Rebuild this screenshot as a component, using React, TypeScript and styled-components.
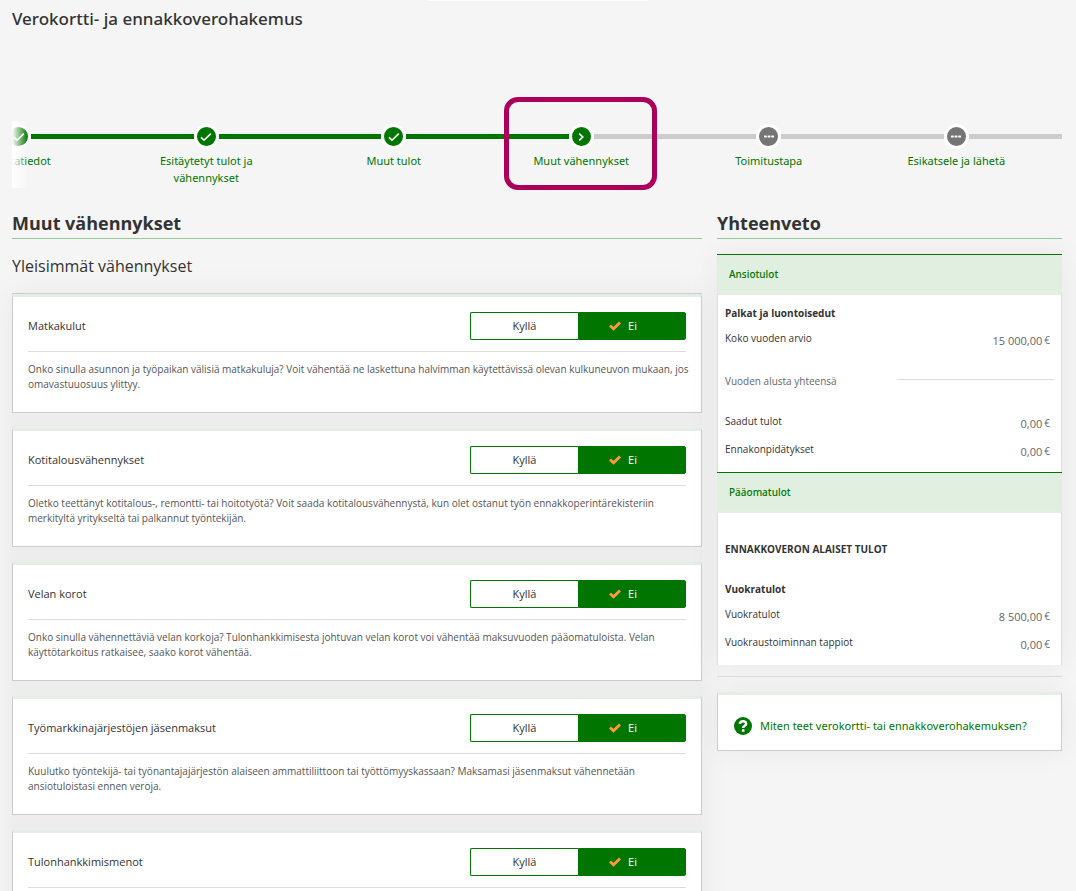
import React from 'react';
import styled, { createGlobalStyle } from 'styled-components';

const GlobalStyle = createGlobalStyle`
  *, *::before, *::after { box-sizing: border-box; }
  html { background: #f5f5f5; }
  body {
    margin: 0;
    overflow-x: hidden;
    color: #333;
    font-family: 'Open Sans', 'Noto Sans', sans-serif;
    font-size: 11px;
    line-height: 18px;
  }
  h1, h2, h3, h4, p, ol, dl, dd { margin: 0; padding: 0; }
`;

const green = '#007600';
const softShadow = '0 0 30px rgba(0, 0, 0, 0.06)';
const mediumFont = "'Noto Sans', 'Open Sans', sans-serif";

const Page = styled.div`
  position: relative;
  padding: 6px 14px 0 12px;
`;

const TopTab = styled.div`
  position: absolute;
  top: 0;
  left: 427px;
  width: 221px;
  height: 1px;
  background: #fff;
`;

const PageTitle = styled.h1`
  font-family: ${mediumFont};
  font-size: 17px;
  line-height: 26px;
  font-weight: 500;
`;

const StepViewport = styled.nav`
  position: relative;
  margin-top: 65px;
  padding-top: 27px;
  height: 94px;
  overflow-x: clip;
`;

const StepFade = styled.div`
  position: absolute;
  left: 0;
  top: 24px;
  width: 16px;
  height: 67px;
  background: linear-gradient(to right, #fff, rgba(255, 255, 255, 0));
`;

const StepList = styled.ol`
  display: flex;
  margin-left: -87px;
  list-style: none;

  &::after {
    content: '';
    flex: none;
    width: 12px;
    height: 5px;
    margin-top: 10px;
    background: #ccc;
  }
`;

const Step = styled.li`
  position: relative;
  flex: 1 1 0;
  min-width: 0;
`;

const StepTrack = styled.div`
  display: flex;
  align-items: center;
`;

const StepLine = styled.span<{ $done: boolean }>`
  flex: 1;
  height: 5px;
  background: ${(p) => (p.$done ? green : '#ccc')};
`;

const StepDot = styled.span<{ $todo: boolean }>`
  display: flex;
  flex: none;
  align-items: center;
  justify-content: center;
  width: 25px;
  height: 25px;
  border: 3px solid #fff;
  border-radius: 50%;
  background: ${(p) => (p.$todo ? '#757575' : green)};
`;

const StepLabel = styled.a`
  display: block;
  padding: 3px 40px 0;
  color: ${green};
  font-family: ${mediumFont};
  font-size: 11px;
  line-height: 17px;
  text-align: center;
  text-decoration: none;
`;

const StepHighlight = styled.span`
  position: absolute;
  top: -27px;
  left: 50%;
  width: 153px;
  height: 93px;
  margin-left: -77px;
  border: 5px solid #aa005a;
  border-radius: 14px;
  pointer-events: none;
`;

const Columns = styled.div`
  display: grid;
  grid-template-columns: 2fr 1fr;
  gap: 15px;
  margin-top: 20px;
`;

const SectionTitle = styled.h2`
  padding-bottom: 2px;
  border-bottom: 1px solid #94c894;
  font-size: 18px;
  line-height: 25px;
  font-weight: 700;
`;

const SubTitle = styled.h3`
  margin: 14px 0;
  font-size: 16px;
  line-height: 26px;
  font-weight: 400;
`;

const CardStack = styled.div`
  display: flex;
  flex-direction: column;
  gap: 15px;
  border-top: 1px solid #ccc;
  background: #ededed;
  box-shadow: ${softShadow};
`;

const Card = styled.section`
  padding: 15px 15px 20px;
  border: 1px solid #ccc;
  border-top: 3px solid #e4eee4;
  background: #fff;
`;

const CardHead = styled.div`
  display: flex;
  align-items: center;
  justify-content: space-between;
  padding-bottom: 11px;
  border-bottom: 1px solid #ddd;
`;

const CardName = styled.h4`
  font-size: 11px;
  line-height: 18px;
  font-weight: 400;
`;

const Toggle = styled.div`
  display: grid;
  grid-template-columns: 1fr 1fr;
  width: 216px;
  height: 28px;
`;

const ToggleButton = styled.button<{ $on?: boolean }>`
  display: flex;
  align-items: center;
  justify-content: center;
  padding: 0;
  border: 1px solid ${green};
  border-right-width: ${(p) => (p.$on ? '1px' : '0')};
  border-radius: ${(p) => (p.$on ? '0 2px 2px 0' : '2px 0 0 2px')};
  background: ${(p) => (p.$on ? green : '#fff')};
  color: ${(p) => (p.$on ? '#fff' : '#333')};
  font: inherit;

  svg { margin: 0 7px 0 -18px; }
`;

const CardText = styled.p`
  margin-right: -8px;
  padding-top: 10px;
  color: #555;
  font-size: 10px;
  line-height: 15px;
`;

const GroupTitle = styled.h3`
  height: 38px;
  padding: 10px 12px;
  border-top: 1px solid ${green};
  background: #e0efe0;
  color: ${green};
  font-family: ${mediumFont};
  font-size: 10px;
  line-height: 18px;
  font-weight: 500;
`;

const Summary = styled.div`
  margin-top: 15px;
  box-shadow: ${softShadow};
`;

const Group = styled.div`
  padding: 9px 7px 11px;
  border: 1px solid #ddd;
  border-top: 3px solid #e4eee4;
  border-bottom: 0;
  background: #fff;
`;

const GroupHeading = styled.h4<{ $spaced?: boolean }>`
  padding: ${(p) => (p.$spaced ? '18px 0 22px' : '0')};
  font-size: 10px;
  line-height: 18px;
  font-weight: 700;
`;

const AmountRow = styled.div`
  display: flex;
  justify-content: space-between;
  padding: 7px 4px 2px 0;
`;

const AmountName = styled.dt`
  font-size: 10px;
  line-height: 18px;
`;

const AmountValue = styled.dd`
  display: flex;
  gap: 2px;
  padding-top: 4px;
  color: #666;
  font-size: 11px;
  line-height: 15px;
`;

const Currency = styled.span`
  font-size: 10px;
  line-height: 14px;
`;

const TotalRow = styled.div`
  display: grid;
  grid-template-columns: 1fr 157px;
  padding: 22px 0 15px;
  color: #666;
  font-size: 10px;
  line-height: 18px;
`;

const TotalRule = styled.span`
  height: 8px;
  border-bottom: 1px solid #ddd;
`;

const Divider = styled.hr`
  margin: 11px 0 15px;
  border: 0;
  border-top: 1px solid #ddd;
`;

const HelpCard = styled(Card)`
  padding: 22px 16px 15px;
  box-shadow: ${softShadow};
`;

const HelpLink = styled.a`
  display: flex;
  align-items: center;
  gap: 8px;
  color: ${green};
  font-family: ${mediumFont};
  text-decoration: none;
`;

const Check = () => (
  <svg width="14" height="14" viewBox="0 0 14 14" fill="none" stroke="#fff" strokeWidth="1.6">
    <path d="M2 7.4 5 10.2 11.8 3.6" />
  </svg>
);
const Chevron = () => (
  <svg width="14" height="14" viewBox="0 0 14 14" fill="none" stroke="#fff" strokeWidth="1.6">
    <path d="M5.2 3.6 8.8 7 5.2 10.4" />
  </svg>
);
const Dots = () => (
  <svg width="14" height="14" viewBox="0 0 14 14" fill="#fff">
    <rect x="2" y="5.4" width="2.8" height="2.2" rx=".6" />
    <rect x="5.6" y="5.4" width="2.8" height="2.2" rx=".6" />
    <rect x="9.2" y="5.4" width="2.8" height="2.2" rx=".6" />
  </svg>
);
const OrangeCheck = () => (
  <svg width="12" height="10" viewBox="0 0 12 10" fill="none" stroke="#ff9c33" strokeWidth="2.8">
    <path d="M1 4.4 4.5 7.7 11 1.5" />
  </svg>
);
const Question = () => (
  <svg width="18" height="18" viewBox="0 0 18 18">
    <circle cx="9" cy="9" r="9" fill={green} />
    <path d="M5.8 6.9C6 3.3 12.1 3.3 12.1 6.7 12.1 8.9 9.1 8.6 9.1 11.1" fill="none" stroke="#fff" strokeWidth="2.5" />
    <rect x="7.8" y="12.2" width="2.7" height="2.6" rx=".5" fill="#fff" />
  </svg>
);

type State = 'done' | 'current' | 'todo';
const steps: { name: string; state: State }[] = [
  { name: 'Taustatiedot', state: 'done' },
  { name: 'Esitäytetyt tulot ja vähennykset', state: 'done' },
  { name: 'Muut tulot', state: 'done' },
  { name: 'Muut vähennykset', state: 'current' },
  { name: 'Toimitustapa', state: 'todo' },
  { name: 'Esikatsele ja lähetä', state: 'todo' },
];

const deductions = [
  ['Matkakulut', 'Onko sinulla asunnon ja työpaikan välisiä matkakuluja? Voit vähentää ne laskettuna halvimman käytettävissä olevan kulkuneuvon mukaan, jos omavastuuosuus ylittyy.'],
  ['Kotitalousvähennykset', 'Oletko teettänyt kotitalous-, remontti- tai hoitotyötä? Voit saada kotitalousvähennystä, kun olet ostanut työn ennakkoperintärekisteriin merkityltä yritykseltä tai palkannut työntekijän.'],
  ['Velan korot', 'Onko sinulla vähennettäviä velan korkoja? Tulonhankkimisesta johtuvan velan korot voi vähentää maksuvuoden pääomatuloista. Velan käyttötarkoitus ratkaisee, saako korot vähentää.'],
  ['Työmarkkinajärjestöjen jäsenmaksut', 'Kuulutko työntekijä- tai työnantajajärjestön alaiseen ammattiliittoon tai työttömyyskassaan? Maksamasi jäsenmaksut vähennetään ansiotuloistasi ennen veroja.'],
  ['Tulonhankkimismenot', ''],
];

const Amount = ({ name, value }: { name: string; value: string }) => (
  <AmountRow>
    <AmountName>{name}</AmountName>
    <AmountValue>{value}<Currency>€</Currency></AmountValue>
  </AmountRow>
);

export default function App() {
  return (
    <>
      <GlobalStyle />
      <Page>
        <TopTab />
        <PageTitle>Verokortti- ja ennakkoverohakemus</PageTitle>
        <StepViewport>
          <StepList>
            {steps.map((s) => (
              <Step key={s.name}>
                <StepTrack>
                  <StepLine $done={s.state !== 'todo'} />
                  <StepDot $todo={s.state === 'todo'}>
                    {s.state === 'done' ? <Check /> : s.state === 'current' ? <Chevron /> : <Dots />}
                  </StepDot>
                  <StepLine $done={s.state === 'done'} />
                </StepTrack>
                <StepLabel href="#">{s.name}</StepLabel>
                {s.state === 'current' && <StepHighlight />}
              </Step>
            ))}
          </StepList>
          <StepFade />
        </StepViewport>
        <Columns>
          <main>
            <SectionTitle>Muut vähennykset</SectionTitle>
            <SubTitle>Yleisimmät vähennykset</SubTitle>
            <CardStack>
              {deductions.map(([name, text]) => (
                <Card key={name}>
                  <CardHead>
                    <CardName>{name}</CardName>
                    <Toggle role="group" aria-label={name}>
                      <ToggleButton type="button" aria-pressed={false}>Kyllä</ToggleButton>
                      <ToggleButton type="button" aria-pressed $on><OrangeCheck />Ei</ToggleButton>
                    </Toggle>
                  </CardHead>
                  <CardText>{text}</CardText>
                </Card>
              ))}
            </CardStack>
          </main>
          <aside>
            <SectionTitle>Yhteenveto</SectionTitle>
            <Summary>
              <GroupTitle>Ansiotulot</GroupTitle>
              <Group>
                <GroupHeading>Palkat ja luontoisedut</GroupHeading>
                <dl><Amount name="Koko vuoden arvio" value="15 000,00" /></dl>
                <TotalRow>Vuoden alusta yhteensä<TotalRule /></TotalRow>
                <dl>
                  <Amount name="Saadut tulot" value="0,00" />
                  <Amount name="Ennakonpidätykset" value="0,00" />
                </dl>
              </Group>
              <GroupTitle>Pääomatulot</GroupTitle>
              <Group>
                <GroupHeading $spaced>ENNAKKOVERON ALAISET TULOT</GroupHeading>
                <GroupHeading>Vuokratulot</GroupHeading>
                <dl>
                  <Amount name="Vuokratulot" value="8 500,00" />
                  <Amount name="Vuokraustoiminnan tappiot" value="0,00" />
                </dl>
              </Group>
            </Summary>
            <Divider />
            <HelpCard>
              <HelpLink href="#"><Question />Miten teet verokortti- tai ennakkoverohakemuksen?</HelpLink>
            </HelpCard>
          </aside>
        </Columns>
      </Page>
    </>
  );
}
